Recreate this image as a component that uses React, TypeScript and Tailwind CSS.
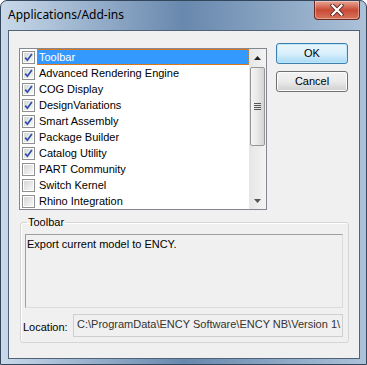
import React from "react";

const items: [string, boolean][] = [
  ["Toolbar", true],
  ["Advanced Rendering Engine", true],
  ["COG Display", true],
  ["DesignVariations", true],
  ["Smart Assembly", true],
  ["Package Builder", true],
  ["Catalog Utility", true],
  ["PART Community", false],
  ["Switch Kernel", false],
  ["Rhino Integration", false],
];

function Check({ checked }: { checked: boolean }) {
  return (
    <span className="w-[13px] h-[13px] shrink-0 border border-[#8e8f8f] bg-white p-px">
      <span className="w-full h-full flex items-center justify-center bg-gradient-to-br from-[#d7d7d7] to-[#f7f7f7]">
        {checked && (
          <svg width="9" height="9" viewBox="0 0 9 9">
            <path d="M1.2 4.6 L3.4 7.2 L7.9 0.9" stroke="#2f4fa8" strokeWidth="1.7" fill="none" />
          </svg>
        )}
      </span>
    </span>
  );
}

export default function App() {
  const font = { fontFamily: '"Liberation Sans", Arial, sans-serif' };
  return (
    <div
      className="w-[367px] h-[365px] flex flex-col rounded-t-[7px] border border-[#34465c] bg-gradient-to-r from-[#c9d9ea] via-[#6888ad] to-[#adc2d9] text-black"
      style={font}
    >
      {/* Title bar */}
      <div className="h-[29px] flex items-start">
        <div
          className="flex-1 pl-[7px] pt-[6px] text-[12px] leading-[16px] text-black"
          style={{ fontFamily: '"Noto Sans", "Open Sans", sans-serif' }}
        >
          Applications/Add-ins
        </div>
        <div className="mr-[6px] w-[46px] h-[19px] rounded-b-[4px] border border-t-0 border-[#6a2a22] bg-gradient-to-b from-[#e7a696] via-[#c84a34] to-[#d8735c] flex items-center justify-center shadow-[inset_0_0_0_1px_rgba(255,255,255,0.35)]">
          <svg width="14" height="12" viewBox="0 0 14 12">
            <path d="M2.5 1.5 L11.5 10.5 M11.5 1.5 L2.5 10.5" stroke="#5b2a24" strokeWidth="4" strokeLinecap="square" />
            <path d="M2.5 1.5 L11.5 10.5 M11.5 1.5 L2.5 10.5" stroke="#ffffff" strokeWidth="2.2" strokeLinecap="square" />
          </svg>
        </div>
      </div>

      {/* Client area */}
      <div className="ml-[7px] mr-[6px] w-[352px] h-[329px] border border-[#4f6278] bg-[#f0f0f0] text-[11px]">
        <div className="flex items-start pl-[10px] pt-[12px]">
          {/* List */}
          <div className="mt-[5px] w-[248px] h-[162px] border border-[#828790] bg-white flex">
            <div className="flex-1 flex flex-col">
              {items.map(([name, checked], i) => (
                <div key={name} className="h-[16px] flex items-center pl-[2px]">
                  <Check checked={checked} />
                  <div
                    className={
                      i === 0
                        ? "ml-[2px] flex-1 h-[16px] leading-[14px] pl-[1px] bg-[#3399ff] text-white border border-dotted border-[#e07a1f]"
                        : "ml-[2px] flex-1 h-[16px] leading-[16px] pl-[2px]"
                    }
                  >
                    {name}
                  </div>
                </div>
              ))}
            </div>
            {/* Scrollbar */}
            <div className="w-[17px] h-full flex flex-col bg-gradient-to-r from-[#e6e6e6] to-[#f3f3f3]">
              <div className="h-[17px] flex items-center justify-center">
                <svg width="7" height="4" viewBox="0 0 7 4">
                  <path d="M3.5 0 L7 4 L0 4 Z" fill="#222" />
                </svg>
              </div>
              <div className="mt-[1px] mx-[1px] h-[79px] rounded-[2px] border border-[#979797] bg-gradient-to-r from-[#f4f4f4] via-[#e8e8e8] to-[#d4d4d4] flex items-center justify-center">
                <div className="flex flex-col gap-[1px]">
                  <div className="w-[7px] h-[1px] bg-[#555]" />
                  <div className="w-[7px] h-[1px] bg-[#555]" />
                  <div className="w-[7px] h-[1px] bg-[#555]" />
                  <div className="w-[7px] h-[1px] bg-[#555]" />
                </div>
              </div>
              <div className="flex-1" />
              <div className="h-[17px] flex items-center justify-center">
                <svg width="7" height="4" viewBox="0 0 7 4">
                  <path d="M0 0 L7 0 L3.5 4 Z" fill="#555" />
                </svg>
              </div>
            </div>
          </div>

          {/* Buttons */}
          <div className="ml-[9px] flex flex-col gap-[7px]">
            <div className="w-[72px] h-[21px] rounded-[3px] border border-[#3c7fb1] bg-gradient-to-b from-[#eaf6fd] via-[#d9f0fc] to-[#a7d9f5] shadow-[inset_0_0_0_1px_#bfe6fb] flex items-center justify-center">
              OK
            </div>
            <div className="w-[72px] h-[21px] rounded-[3px] border border-[#707070] bg-gradient-to-b from-[#f2f2f2] via-[#ebebeb] to-[#cfcfcf] shadow-[inset_0_0_0_1px_#fcfcfc] flex items-center justify-center">
              Cancel
            </div>
          </div>
        </div>

        {/* Group box */}
        <fieldset className="ml-[11px] mt-[6px] w-[329px] h-[127px] border border-[#d5d5d5] rounded-[3px] shadow-[inset_1px_1px_0_#ffffff]">
          <legend className="ml-[6px] px-[1px] leading-[13px]">Toolbar</legend>
          <div className="ml-[4px] mt-[5px] w-[318px] h-[74px] border border-t-[#a0a0a0] border-l-[#a0a0a0] border-r-[#dcdcdc] border-b-[#dcdcdc] bg-[#f0f0f0] pl-[1px] pt-[3px] leading-[13px]">
            Export current model to ENCY.
          </div>
          <div className="mt-[6px] flex items-center">
            <div className="ml-[2px] w-[50px] pt-[4px]">Location:</div>
            <div className="w-[270px] h-[23px] border border-[#cfcfcf] bg-[#f0f0f0] pl-[3px] leading-[19px] whitespace-nowrap text-[#333] text-[11px]">
              C:\ProgramData\ENCY Software\ENCY NB\Version 1\
            </div>
          </div>
        </fieldset>
      </div>
    </div>
  );
}
